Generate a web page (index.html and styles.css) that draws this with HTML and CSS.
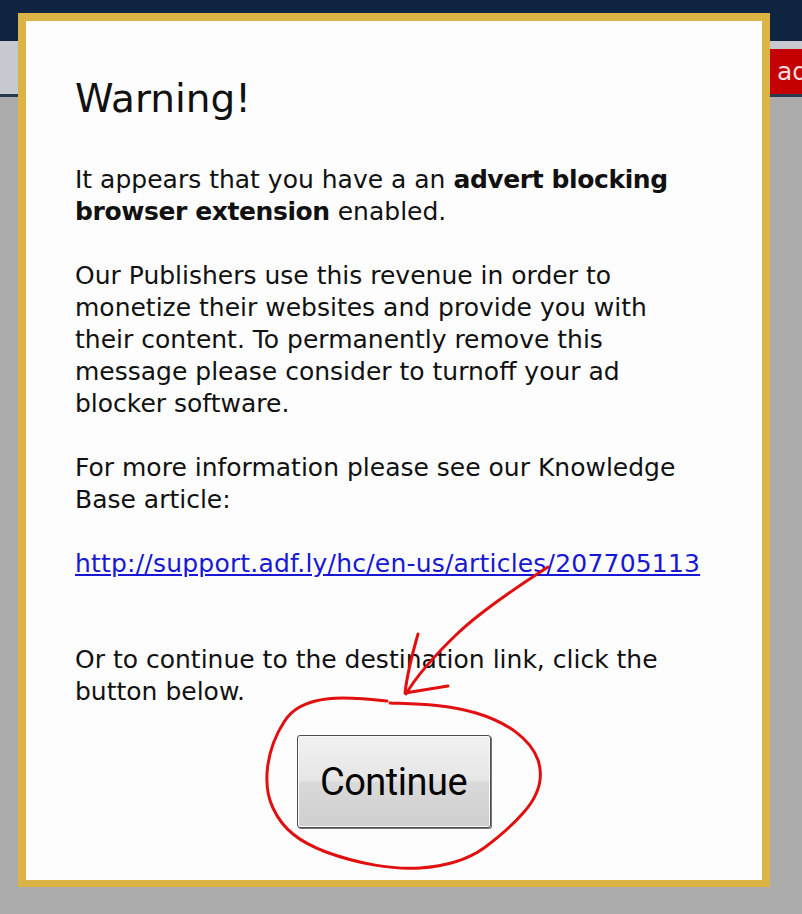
FILE: index.html
```html
<!DOCTYPE html>
<html lang="en">
<head>
<meta charset="utf-8">
<title>Warning</title>
<link rel="stylesheet" href="styles.css">
</head>
<body>
<div class="page">
  <header class="topbar"></header>
  <nav class="subbar">
    <div class="adbox">ad</div>
  </nav>
</div>

<div class="modal">
  <h1 class="title">Warning!</h1>
  <p class="para">It appears that you have a an <b>advert blocking browser extension</b> enabled.</p>
  <p class="para">Our Publishers use this revenue in order to monetize their websites and provide you with their content. To permanently remove this message please consider to turnoff your ad blocker software.</p>
  <p class="para">For more information please see our Knowledge Base article:</p>
  <p class="para para-link"><a class="kb-link" href="#">http://support.adf.ly/hc/en-us/articles/207705113</a></p>
  <p class="para para-last">Or to continue to the destination link, click the button below.</p>
  <div class="actions">
    <button class="continue-btn" type="button">Continue</button>
  </div>
</div>

<svg class="scribble" width="802" height="914" viewBox="0 0 802 914" aria-hidden="true">
  <path d="M548 567 C520 585 482 610 457 634 C432 658 416 677 406 694" />
  <path d="M418 634 C412 655 407 675 405 693 L448 686" />
  <path d="M387 701 C350 697 302 692 284 722 C266 750 262 785 273 808 C283 830 300 842 326 852 C356 863 392 870 420 868 C450 866 470 858 484 848 C500 836 512 826 524 812 C538 796 544 778 538 760 C530 738 506 722 476 713 C446 704 416 704 390 703" />
</svg>
</body>
</html>
```
FILE: styles.css
```css
html, body {
  margin: 0;
  padding: 0;
}

body {
  width: 802px;
  height: 914px;
  overflow: hidden;
  background: #acacac;
  font-family: "DejaVu Sans", Verdana, sans-serif;
  position: relative;
}

.page {
  display: flex;
  flex-direction: column;
}

.topbar {
  height: 41px;
  background: #0f2440;
}

.subbar {
  height: 53px;
  background: #c6c9cf;
  border-bottom: 3px solid #2a3850;
  display: flex;
  justify-content: flex-end;
  align-items: flex-end;
}

.adbox {
  width: 33px;
  height: 45px;
  background: #c50000;
  color: #f6dede;
  font-family: "DejaVu Sans", sans-serif;
  font-size: 25px;
  line-height: 45px;
  padding-left: 8px;
  box-sizing: border-box;
  overflow: hidden;
  white-space: nowrap;
}

.modal {
  position: absolute;
  left: 18px;
  top: 13px;
  width: 752px;
  height: 874px;
  box-sizing: border-box;
  border: 8px solid #dcb446;
  border-bottom-width: 7px;
  background: #fdfdfd;
  padding: 55px 50px 0 49px;
  color: #111;
}

.title {
  margin: 0 0 42px;
  font-size: 39px;
  line-height: 46px;
  font-weight: normal;
  color: #111;
}

.para {
  max-width: 615px;
  margin: 0 0 32px;
  font-size: 25px;
  line-height: 32px;
}

.para b {
  font-weight: bold;
  letter-spacing: -0.4px;
}

.para-link {
  margin-bottom: 64px;
  white-space: nowrap;
}

.para-last {
  margin-bottom: 27px;
}

.kb-link {
  color: #1717d4;
  text-decoration: underline;
  letter-spacing: 0.2px;
}

.actions {
  display: flex;
  justify-content: center;
}

.continue-btn {
  width: 194px;
  height: 93px;
  border: 1px solid #4d4d4d;
  border-radius: 3px;
  background: linear-gradient(to bottom, #f1f1f1 0%, #e6e6e6 48%, #d9d9d9 52%, #cfcfcf 100%);
  box-shadow: inset 0 0 0 1px #fafafa, 1px 1px 0 #777;
  font-family: Roboto, "Open Sans", sans-serif;
  font-size: 38px;
  letter-spacing: -0.5px;
  color: #050505;
  padding: 0;
  cursor: pointer;
}

.scribble {
  position: absolute;
  left: 0;
  top: 0;
  pointer-events: none;
}

.scribble path {
  fill: none;
  stroke: #e10f0f;
  stroke-width: 3;
  stroke-linecap: round;
  stroke-linejoin: round;
}
```
